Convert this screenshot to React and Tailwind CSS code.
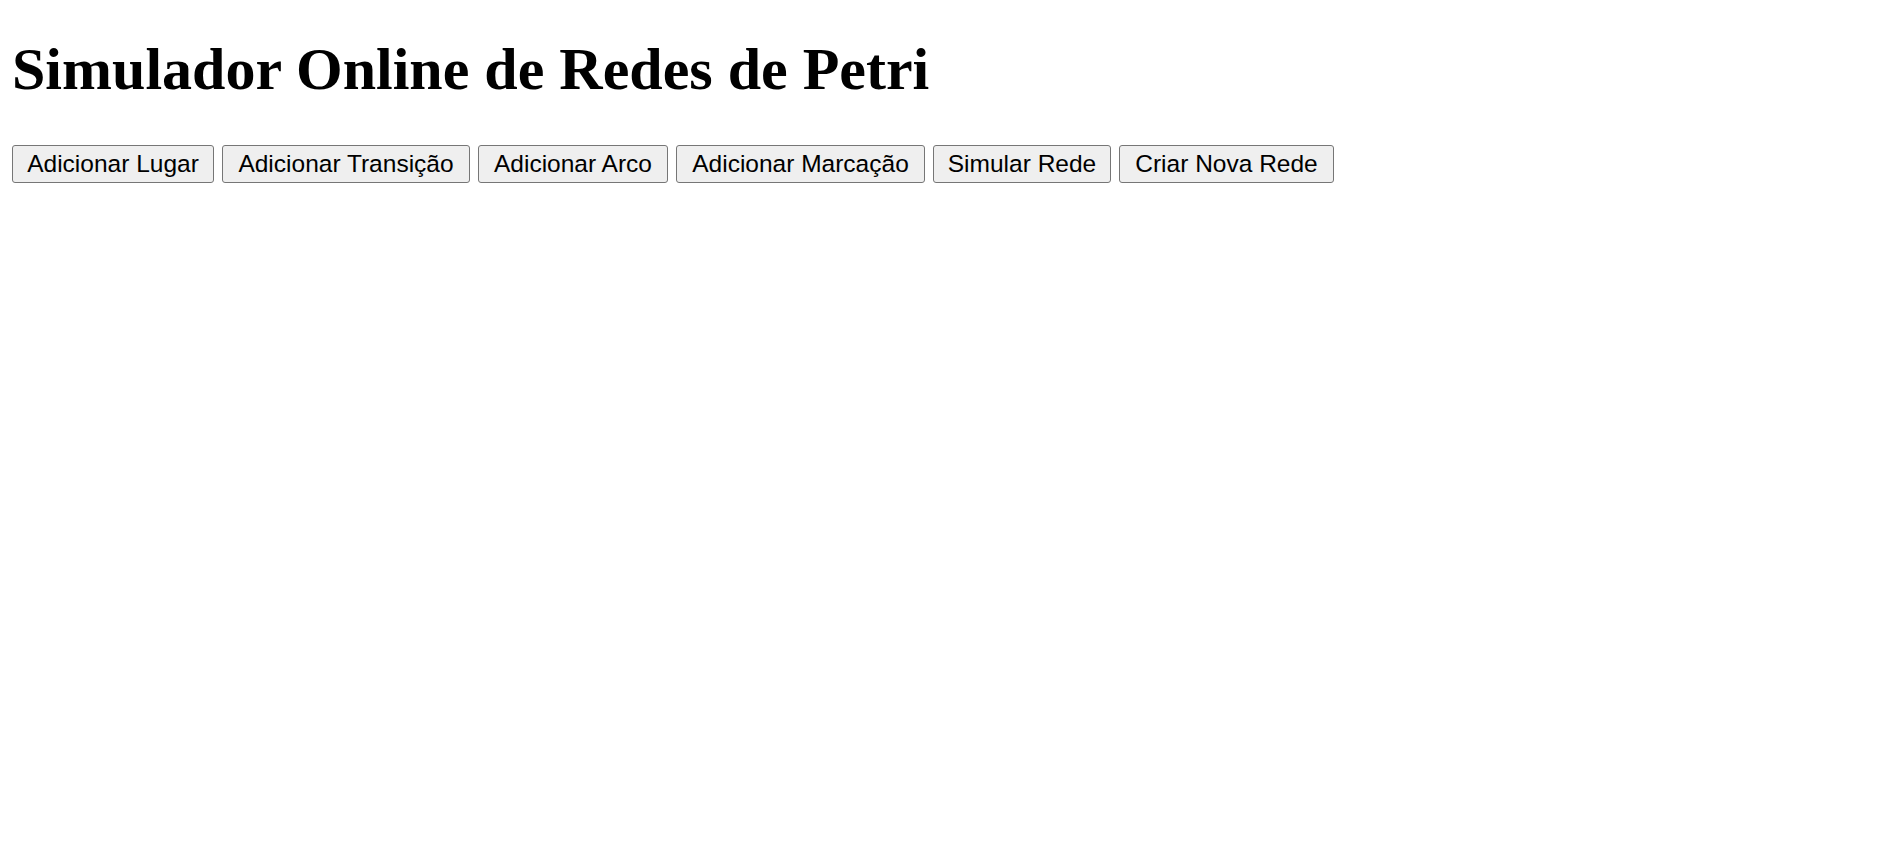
import React from "react";

const buttons = [
  { label: "Adicionar Lugar", width: "w-[202px]" },
  { label: "Adicionar Transição", width: "w-[248px]" },
  { label: "Adicionar Arco", width: "w-[190px]" },
  { label: "Adicionar Marcação", width: "w-[249px]" },
  { label: "Simular Rede", width: "w-[178px]" },
  { label: "Criar Nova Rede", width: "w-[215px]" },
];

export default function App() {
  return (
    <div className="min-h-screen w-full bg-white pl-[12px] pt-[35px] text-black">
      <h1 className="text-[60px] leading-[69px] font-bold font-['Liberation_Serif','Times_New_Roman',serif]">
        Simulador Online de Redes de Petri
      </h1>

      <div className="mt-[41px] flex items-center gap-[8px]">
        {buttons.map((b) => (
          <button
            key={b.label}
            className={`${b.width} h-[38px] shrink-0 whitespace-nowrap rounded-[3px] border border-[#767676] bg-[#efefef] px-0 py-[4px] text-center text-[24.5px] leading-[28px] font-['Liberation_Sans',Arial,sans-serif] text-black hover:bg-[#e5e5e5]`}
          >
            {b.label}
          </button>
        ))}
      </div>
    </div>
  );
}
